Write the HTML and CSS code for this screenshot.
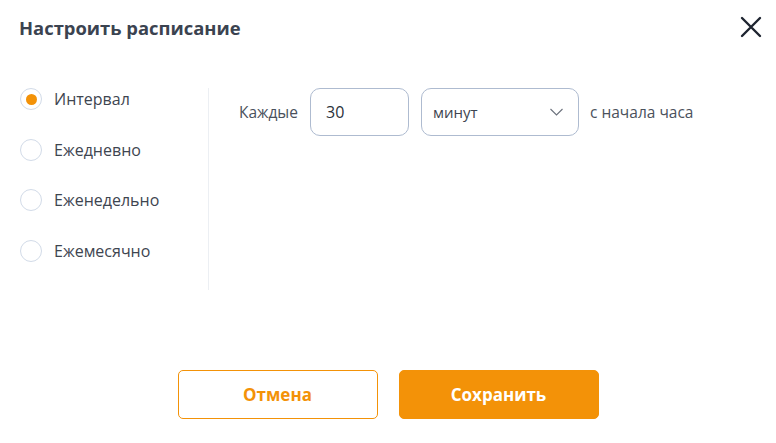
FILE: index.html
```html
<!DOCTYPE html>
<html lang="ru">
<head>
<meta charset="utf-8">
<link rel="stylesheet" href="styles.css">
</head>
<body>
<div class="dialog">
  <header class="header">
    <h1 class="title">Настроить расписание</h1>
    <button class="close" aria-label="Закрыть">
      <svg width="22" height="22" viewBox="0 0 22 22"><path d="M2 2 L20 20 M20 2 L2 20" stroke="#1e2430" stroke-width="2.4" stroke-linecap="round"/></svg>
    </button>
  </header>
  <main class="body">
    <ul class="options">
      <li class="option"><span class="radio checked"></span><span class="opt-label">Интервал</span></li>
      <li class="option"><span class="radio"></span><span class="opt-label">Ежедневно</span></li>
      <li class="option"><span class="radio"></span><span class="opt-label">Еженедельно</span></li>
      <li class="option"><span class="radio"></span><span class="opt-label">Ежемесячно</span></li>
    </ul>
    <section class="settings">
      <div class="row">
        <span class="text every">Каждые</span>
        <div class="field num">30</div>
        <div class="field select"><span>минут</span>
          <svg width="13" height="8" viewBox="0 0 13 8"><path d="M0.5 1 L6.5 7 L12.5 1" fill="none" stroke="#6b717c" stroke-width="1.1"/></svg>
        </div>
        <span class="text">с начала часа</span>
      </div>
    </section>
  </main>
  <footer class="footer">
    <button class="btn btn-outline">Отмена</button>
    <button class="btn btn-primary">Сохранить</button>
  </footer>
</div>
</body>
</html>
```
FILE: styles.css
```css
* { box-sizing: border-box; }
html, body { margin: 0; padding: 0; background: #fff; }
body { font-family: "Open Sans", "Noto Sans", sans-serif; color: #3e4550; }
.dialog { width: 776px; height: 443px; display: flex; flex-direction: column; }
.header { flex: none; height: 56px; display: flex; align-items: center; justify-content: space-between; padding: 0 12px 2px 19px; }
.title { margin: 0; font-size: 18.4px; font-weight: 700; color: #3b4350; }
.close { border: 0; background: none; padding: 0; width: 26px; height: 26px; display: flex; align-items: center; justify-content: center; cursor: pointer; }
.body { flex: none; display: flex; margin-top: 32px; height: 202px; }
.options { list-style: none; margin: 0; padding: 0 0 0 20px; width: 209px; border-right: 1px solid #eceff3; display: flex; flex-direction: column; gap: 28.7px; }
.option { display: flex; align-items: center; height: 22px; gap: 12px; }
.radio { width: 22px; height: 22px; border-radius: 50%; border: 1px solid #d2dbe8; display: flex; align-items: center; justify-content: center; flex: none; }
.radio.checked::after { content: ""; width: 11px; height: 11px; border-radius: 50%; background: #f39208; }
.opt-label { font-size: 16px; color: #3e4550; }
.settings { padding-left: 30px; }
.row { display: flex; align-items: center; height: 48px; }
.text { font-size: 15.5px; color: #4a515c; }
.every { width: 60px; }
.field { height: 48px; border: 1px solid #aebbd0; border-radius: 10px; display: flex; align-items: center; font-size: 15px; color: #2b313a; }
.num { width: 99px; margin: 0 12px 0 11px; padding-left: 15px; font-size: 16px; }
.select { width: 158px; margin-right: 11px; padding: 0 15px 0 11px; justify-content: space-between; color: #3e4550; }
.footer { flex: none; margin-top: 80px; display: flex; justify-content: center; gap: 21px; }
.btn { width: 200px; height: 49px; border-radius: 5px; font-family: inherit; font-size: 17px; font-weight: 700; cursor: pointer; }
.btn-outline { background: #fff; border: 1px solid #f39208; color: #f39208; }
.btn-primary { background: #f39208; border: 1px solid #f39208; color: #fff; }
```
